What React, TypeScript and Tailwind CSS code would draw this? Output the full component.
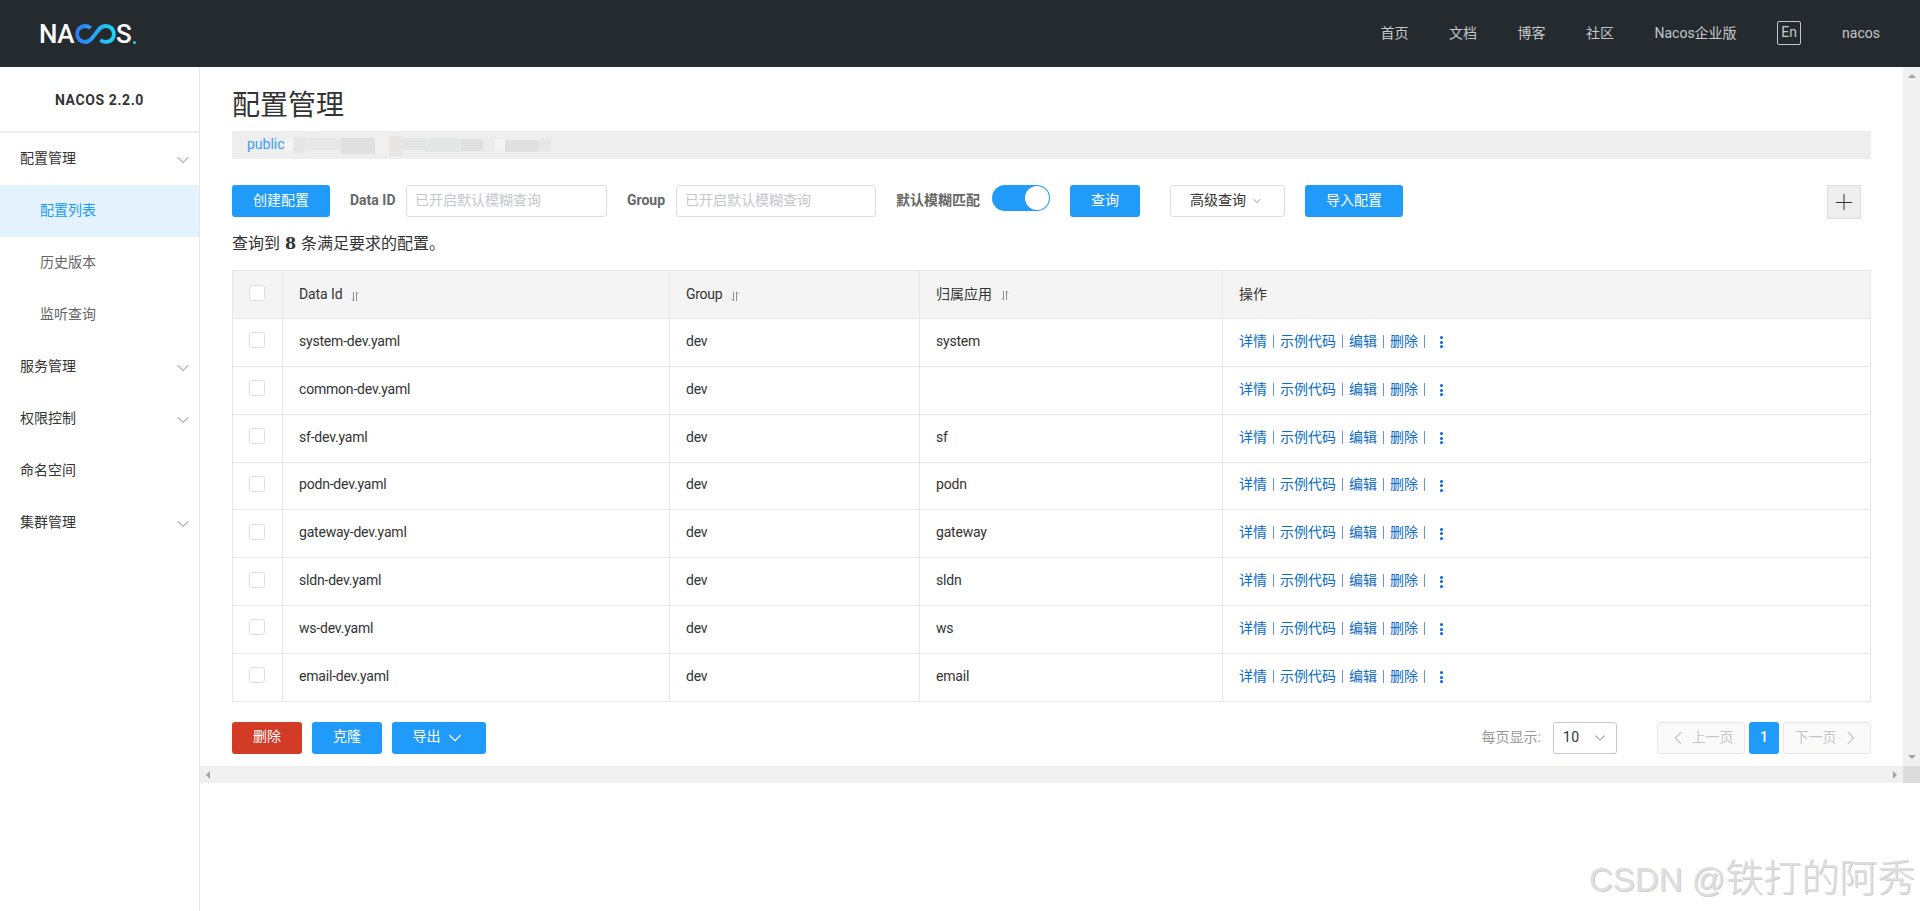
import { ChevronDown, ChevronLeft, ChevronRight } from 'lucide-react';

const navLinks = ['首页', '文档', '博客', '社区', 'Nacos企业版'];

const rows = [
  { dataId: 'system-dev.yaml', app: 'system' },
  { dataId: 'common-dev.yaml', app: '' },
  { dataId: 'sf-dev.yaml', app: 'sf' },
  { dataId: 'podn-dev.yaml', app: 'podn' },
  { dataId: 'gateway-dev.yaml', app: 'gateway' },
  { dataId: 'sldn-dev.yaml', app: 'sldn' },
  { dataId: 'ws-dev.yaml', app: 'ws' },
  { dataId: 'email-dev.yaml', app: 'email' },
];

const actions = ['详情', '示例代码', '编辑', '删除'];

function SortIcon() {
  return (
    <svg width="8" height="11" viewBox="0 0 8 11" className="ml-[9px] mt-[3px] text-[#8a8f99]" fill="none" stroke="currentColor" strokeWidth="1">
      <path d="M2.5 1v9M0.8 8.2 2.5 10" />
      <path d="M5.5 10V1M5.5 1 7.2 2.8" />
    </svg>
  );
}

function Checkbox() {
  return <span className="block w-4 h-4 bg-white border border-[#dcdee3] rounded-[3px]" />;
}

function Kebab() {
  return (
    <span className="ml-[9px] mt-[2px] flex flex-col gap-[1.5px]">
      <i className="block w-[3px] h-[3px] rounded-full bg-[#0d62c4]" />
      <i className="block w-[3px] h-[3px] rounded-full bg-[#0d62c4]" />
      <i className="block w-[3px] h-[3px] rounded-full bg-[#0d62c4]" />
    </span>
  );
}

function Logo() {
  return (
    <div className="flex items-center h-[20px] text-white font-['Roboto',sans-serif] text-[26px] font-medium leading-none">
      <span className="tracking-[-0.5px]">NA</span>
      <svg width="41" height="20" viewBox="0 0 43 20" preserveAspectRatio="none" fill="none" strokeWidth="4" className="ml-[1px]">
        <defs>
          <linearGradient id="loop" x1="0" x2="1" y1="0" y2="0">
            <stop offset="0" stopColor="#2f7bf5" />
            <stop offset="0.5" stopColor="#27a8f7" />
            <stop offset="1" stopColor="#1fd4f4" />
          </linearGradient>
        </defs>
        <path
          stroke="url(#loop)"
          d="M16.500 4C14.500 2.500 13 2 10.500 2C5.800 2 2.200 5.400 2.200 10S5.800 18 10.500 18C13.500 18 15.500 17 17.500 14.500L25 5.500C27 3 29.500 2 32.500 2C37.200 2 40.800 5.400 40.800 10S37.200 18 32.500 18C30 18 28.500 17.500 26.500 16"
        />
      </svg>
      <span>S</span>
      <span className="ml-[1px] self-end w-[3px] h-[3px] rounded-full bg-[#1fd4f4]" />
    </div>
  );
}

function SideItem({ label, chevron }: { label: string; chevron?: boolean }) {
  return (
    <div className="h-[52px] pl-5 pr-[6px] flex items-center justify-between text-[#333]">
      <span className="pb-[2px]">{label}</span>
      {chevron && <ChevronDown className="w-5 h-5 mt-[2px] text-[#666]" strokeWidth={1} />}
    </div>
  );
}

function SubItem({ label, active }: { label: string; active?: boolean }) {
  return (
    <div className={`h-[52px] pl-10 pb-[2px] flex items-center ${active ? 'bg-[#e3f2fd] text-[#209bfa]' : 'text-[#666]'}`}>{label}</div>
  );
}

function BlueButton({ label, width }: { label: string; width: string }) {
  return (
    <button className={`${width} h-8 pb-[2px] bg-[#209bfa] text-white rounded-[3px] text-center`}>{label}</button>
  );
}

export default function App() {
  return (
    <div className="w-[1920px] h-[911px] relative overflow-hidden bg-white flex flex-col text-[14px] text-[#333] font-['Roboto','Noto_Sans_CJK_SC',sans-serif]">
      <header className="h-[67px] shrink-0 bg-[#252a2f] flex items-center justify-between pl-[39px] pr-[40px] text-[#c5c8ca]">
        <Logo />
        <nav className="flex items-center">
          {navLinks.map((n) => (
            <span key={n} className="mr-[40.5px] mt-[-1px]">{n}</span>
          ))}
          <span className="w-6 h-6 mr-[41px] mt-[-2px] border border-[#c5c8ca] rounded-[2px] flex items-center justify-center">En</span>
          <span className="mt-[-1px]">nacos</span>
        </nav>
      </header>

      <div className="flex-1 flex min-h-0">
        <aside className="w-[200px] shrink-0 border-r border-[#e6e6e6]">
          <div className="h-[66px] pt-[2px] flex items-center justify-center font-bold text-[#333] tracking-[0.6px] border-b-2 border-[#eeeeee]">NACOS 2.2.0</div>
          <SideItem label="配置管理" chevron />
          <SubItem label="配置列表" active />
          <SubItem label="历史版本" />
          <SubItem label="监听查询" />
          <SideItem label="服务管理" chevron />
          <SideItem label="权限控制" chevron />
          <SideItem label="命名空间" />
          <SideItem label="集群管理" chevron />
        </aside>

        <div className="flex-1 min-w-0 flex flex-col">
          <div className="h-[699px] flex">
            <main className="flex-1 min-w-0 pl-8 pr-8">
              <h1 className="pt-[22px] text-[28px] leading-[34px] font-normal text-[#333]">配置管理</h1>
              <div className="mt-[8px] h-[28px] bg-[#eeeeee] pl-[15px] pb-[1px] flex items-center text-[14px] text-[#3d9df5]">
                <span>public</span>
                <div className="flex items-center h-5">
                  <span className="w-[8px] h-[12px] bg-[#f4f4f4]" />
                  <span className="w-[12px] h-[16px] bg-[#e6e6e6]" />
                  <span className="w-[36px] h-[12px] mt-[-2px] bg-[#e8e8e8]" />
                  <span className="w-[34px] h-[16px] mt-[2px] bg-[#e0e0e0]" />
                  <span className="w-[14px] h-[18px] bg-[#f0f0f0]" />
                  <span className="w-[14px] h-[20px] mt-[2px] bg-[#e8e6e3]" />
                  <span className="w-[22px] h-[12px] mt-[-2px] bg-[#e3e4e5]" />
                  <span className="w-[36px] h-[14px] bg-[#e5e6e6]" />
                  <span className="w-[22px] h-[12px] bg-[#e0e0e0]" />
                  <span className="w-[12px] h-[14px] bg-[#ececec]" />
                  <span className="w-[10px] h-[12px] bg-[#f4f4f4]" />
                  <span className="w-[34px] h-[12px] mt-[2px] bg-[#e0e0e0]" />
                  <span className="w-[12px] h-[12px] bg-[#e6e6e6]" />
                </div>
              </div>

              <div className="mt-[26px] flex items-start">
                <BlueButton label="创建配置" width="w-[98px]" />
                <label className="ml-5 w-[56px] leading-[30px] font-bold text-[#666] text-[14px]">Data ID</label>
                <div className="w-[201px] h-8 border border-[#dcdee3] rounded-[3px] pl-2 leading-[28px] text-[#c4c6cf]">已开启默认模糊查询</div>
                <label className="ml-5 w-[49px] leading-[30px] font-bold text-[#666]">Group</label>
                <div className="w-[200px] h-8 border border-[#dcdee3] rounded-[3px] pl-2 leading-[28px] text-[#c4c6cf]">已开启默认模糊查询</div>
                <label className="ml-5 w-[96px] leading-[30px] font-bold text-[#666]">默认模糊匹配</label>
                <span className="w-[58px] h-[26px] bg-[#209bfa] rounded-full flex items-center justify-end pr-[1px]">
                  <i className="block w-6 h-6 bg-white rounded-full" />
                </span>
                <BlueButton label="查询" width="w-[70px] ml-5" />
                <button className="ml-[30px] w-[115px] h-8 pb-[2px] border border-[#dcdee3] rounded-[3px] bg-white text-[#333] flex items-center justify-center gap-[5px] pr-[2px]">
                  高级查询
                  <ChevronDown className="w-3 h-3 mt-[2px] text-[#666]" strokeWidth={1.5} />
                </button>
                <BlueButton label="导入配置" width="w-[98px] ml-5" />
                <button className="ml-auto mr-[10px] w-[34px] h-[34px] bg-[#eeeeee] border border-[#dddddd] flex items-center justify-center">
                  <svg width="16" height="16" viewBox="0 0 16 16" stroke="#333" strokeWidth="1">
                    <path d="M8 0v16M0 8.500h16" />
                  </svg>
                </button>
              </div>

              <p className="mt-[11px] h-[28px] leading-[28px] text-[16px] text-[#333]">
                查询到 <strong className="font-bold font-['DejaVu_Serif',serif] mx-[1px]">8</strong> 条满足要求的配置。
              </p>

              <table className="mt-[12px] w-full table-fixed border-collapse border border-[#e6e7eb]">
                <colgroup>
                  <col className="w-[50px]" />
                  <col className="w-[387px]" />
                  <col className="w-[250px]" />
                  <col className="w-[303px]" />
                  <col />
                </colgroup>
                <thead>
                  <tr className="h-[48px] bg-[#f4f4f4] text-left">
                    <th className="border border-[#e6e7eb] pl-[16px] pb-[4px] font-normal"><Checkbox /></th>
                    <th className="border border-[#e6e7eb] pl-[16px] font-normal">
                      <span className="flex items-center tracking-[-0.1px]">Data Id <SortIcon /></span>
                    </th>
                    <th className="border border-[#e6e7eb] pl-[16px] font-normal">
                      <span className="flex items-center tracking-[-0.3px]">Group <SortIcon /></span>
                    </th>
                    <th className="border border-[#e6e7eb] pl-[16px] pb-[1px] font-normal">
                      <span className="flex items-center">归属应用 <SortIcon /></span>
                    </th>
                    <th className="border border-[#e6e7eb] pl-[16px] pb-[1px] font-normal">操作</th>
                  </tr>
                </thead>
                <tbody>
                  {rows.map((r) => (
                    <tr key={r.dataId} className="h-[47.85px]">
                      <td className="border border-[#e6e7eb] pl-[16px] pb-[4px]"><Checkbox /></td>
                      <td className="border border-[#e6e7eb] pl-[16px] pb-[2px] tracking-[-0.2px]">{r.dataId}</td>
                      <td className="border border-[#e6e7eb] pl-[16px] pb-[2px] tracking-[-0.2px]">dev</td>
                      <td className="border border-[#e6e7eb] pl-[16px] pb-[2px] tracking-[-0.2px]">{r.app}</td>
                      <td className="border border-[#e6e7eb] pl-[16px] pb-[2px]">
                        <span className="flex items-center text-[#0d6bc9]">
                          {actions.map((a) => (
                            <span key={a} className="flex items-center">
                              {a}
                              <i className="block w-[1px] h-[13px] mx-[6px] bg-[#6a97c9]" />
                            </span>
                          ))}
                          <Kebab />
                        </span>
                      </td>
                    </tr>
                  ))}
                </tbody>
              </table>

              <div className="mt-[20px] flex items-center h-8">
                <button className="w-[70px] h-8 pb-[2px] bg-[#d23c26] text-white rounded-[3px]">删除</button>
                <BlueButton label="克隆" width="w-[70px] ml-[10px]" />
                <button className="ml-[10px] w-[94px] h-8 pb-[2px] bg-[#209bfa] text-white rounded-[3px] flex items-center justify-center gap-[3px]">
                  导出
                  <ChevronDown className="w-[22px] h-[22px] mt-[2px]" strokeWidth={1.2} />
                </button>

                <span className="ml-auto pb-[1px] text-[#999]">每页显示:</span>
                <div className="ml-[12px] w-[64px] h-8 border border-[#c4c6cf] rounded-[3px] pl-[9px] pr-[7px] flex items-center justify-between">
                  <span className="tracking-[0.3px]">10</span>
                  <ChevronDown className="w-[18px] h-[18px] text-[#666]" strokeWidth={1.1} />
                </div>
                <div className="ml-[40px] w-[88px] h-8 bg-[#fafafa] border border-[#e6e7eb] rounded-[3px] flex items-center justify-center gap-[3px] text-[#c4c6cf]">
                  <ChevronLeft className="w-[22px] h-[22px] -ml-[2px]" strokeWidth={1.2} />
                  上一页
                </div>
                <div className="ml-1 w-[30px] h-8 bg-[#209bfa] text-white rounded-[3px] flex items-center justify-center font-medium">1</div>
                <div className="ml-1 w-[88px] h-8 bg-[#fafafa] border border-[#e6e7eb] rounded-[3px] flex items-center justify-center gap-[3px] text-[#c4c6cf]">
                  下一页
                  <ChevronRight className="w-[22px] h-[22px] -mr-[2px]" strokeWidth={1.2} />
                </div>
              </div>
            </main>

            <div className="w-[17px] shrink-0 bg-[#f1f1f1] flex flex-col items-center justify-between py-[7px]">
              <i className="block w-0 h-0 border-x-[4px] border-x-transparent border-b-[4px] border-b-[#a3a3a3]" />
              <i className="block w-0 h-0 border-x-[4px] border-x-transparent border-t-[4px] border-t-[#a3a3a3]" />
            </div>
          </div>

          <div className="h-[17px] flex">
            <div className="flex-1 bg-[#f0f0f0] flex items-center justify-between px-[6px]">
              <i className="block w-0 h-0 border-y-[4px] border-y-transparent border-r-[4px] border-r-[#a3a3a3]" />
              <i className="block w-0 h-0 border-y-[4px] border-y-transparent border-l-[4px] border-l-[#a3a3a3]" />
            </div>
            <div className="w-[17px] bg-[#dcdcdc]" />
          </div>
        </div>
      </div>

      <div className="absolute left-[1589px] top-[858px] text-[33px] leading-[40px] whitespace-nowrap text-[#dedede] [text-shadow:1px_1px_0_#cfcfcf] font-['Liberation_Sans','Noto_Sans_CJK_SC',sans-serif]">
        CSDN @<span className="text-[38px] font-light">铁打的阿秀</span>
      </div>
    </div>
  );
}
